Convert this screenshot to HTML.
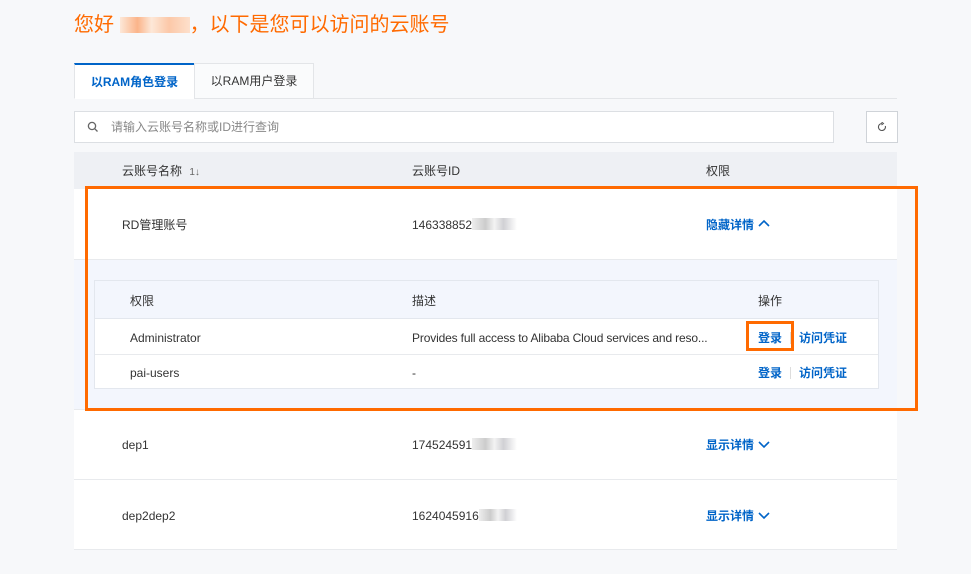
<!DOCTYPE html>
<html><head><meta charset="utf-8"><style>
*{box-sizing:border-box;margin:0;padding:0}
body{width:971px;height:574px;background:#f7f8fa;font-family:"Liberation Sans","Noto Sans CJK SC",sans-serif;font-size:12px;color:#333;position:relative;overflow:hidden}
.a{position:absolute;line-height:14px}
.title{left:74px;top:12px;font-size:20px;line-height:26px;color:#ff6a00}
.blur{display:inline-block;width:70px;height:16px;vertical-align:-2px;background:linear-gradient(90deg,#fde8d8,#fbb48a 25%,#fde8d8 45%,#fcc8a8 70%,#fde0cc)}
.tabline{left:74px;top:98px;width:823px;height:1px;background:#e3e5e8}
.tab{top:63px;height:36px;line-height:35px;text-align:center;font-size:12px;border:1px solid #e3e5e8;background:#fff}
.search{left:74px;top:111px;width:760px;height:32px;border:1px solid #dcdfe3;background:#fff;line-height:30px;padding-left:36px;color:#888}
.ref{left:866px;top:111px;width:32px;height:32px;border:1px solid #cfd3d8;background:#fff}
.th{left:74px;top:152px;width:823px;height:37px;background:#eef0f4}
.row{left:74px;width:823px;background:#fff;border-bottom:1px solid #e8eaed}
.link{color:#0064c8;font-weight:bold}
.bl{display:inline-block;height:12px;vertical-align:-1px;background:linear-gradient(90deg,#eee,#ccc 30%,#f3f3f3 50%,#d0d0d4 70%,#fff)}
.sep{position:absolute;width:1px;height:12px;background:#ddd}
</style></head><body>
<div class="a title">您好 <span class="blur"></span>，以下是您可以访问的云账号</div>
<div class="a tabline"></div>
<div class="a tab" style="left:74px;width:121px;border-top:2px solid #0064c8;border-bottom-color:#fff;color:#0064c8;font-weight:bold">以RAM角色登录</div>
<div class="a tab" style="left:194px;width:120px;background:#fafbfc">以RAM用户登录</div>
<div class="a search">请输入云账号名称或ID进行查询</div>
<svg class="a" style="left:87px;top:121px" width="12" height="12" viewBox="0 0 12 12"><circle cx="5" cy="5" r="3.6" fill="none" stroke="#666" stroke-width="1.3"/><path d="M7.6 7.6L10.5 10.5" stroke="#666" stroke-width="1.3"/></svg>
<div class="a ref"></div>
<svg class="a" style="left:877px;top:122px" width="10" height="10" viewBox="0 0 10 10"><path d="M5 1.5A3.5 3.5 0 1 0 8.3 4" fill="none" stroke="#555" stroke-width="1.1"/><path d="M4.5 0L6.5 1.5 4.5 3" fill="none" stroke="#555" stroke-width="1"/></svg>
<div class="a th"></div>
<div class="a" style="left:122px;top:164px">云账号名称 <span style="color:#666;font-size:10px;margin-left:4px">1↓</span></div>
<div class="a" style="left:412px;top:164px">云账号ID</div>
<div class="a" style="left:706px;top:164px">权限</div>
<div class="a row" style="top:189px;height:71px"></div>
<div class="a" style="left:122px;top:218px">RD管理账号</div>
<div class="a" style="left:412px;top:218px">146338852<span class="bl" style="width:45px"></span></div>
<div class="a link" style="left:706px;top:218px">隐藏详情</div>
<svg class="a" style="left:758px;top:219px" width="12" height="10" viewBox="0 0 12 10"><path d="M1 7L6 2 11 7" fill="none" stroke="#0064c8" stroke-width="1.6"/></svg>
<div class="a" style="left:74px;top:260px;width:823px;height:150px;background:#f3f6fd"></div>
<div class="a" style="left:94px;top:280px;width:785px;height:109px;background:#fff;border:1px solid #e3e7ee"></div>
<div class="a" style="left:95px;top:281px;width:783px;height:38px;background:#f3f6fd;border-bottom:1px solid #e3e7ee"></div>
<div class="a" style="left:95px;top:354px;width:783px;height:1px;background:#e8eaed"></div>
<div class="a" style="left:130px;top:294px">权限</div>
<div class="a" style="left:412px;top:294px">描述</div>
<div class="a" style="left:758px;top:294px">操作</div>
<div class="a" style="left:130px;top:331px">Administrator</div>
<div class="a" style="left:412px;top:331px;letter-spacing:-0.15px">Provides full access to Alibaba Cloud services and reso...</div>
<div class="a link" style="left:758px;top:331px">登录</div><div class="sep" style="left:790px;top:332px"></div><div class="a link" style="left:799px;top:331px">访问凭证</div>
<div class="a" style="left:130px;top:366px">pai-users</div>
<div class="a" style="left:412px;top:366px">-</div>
<div class="a link" style="left:758px;top:366px">登录</div><div class="sep" style="left:790px;top:367px"></div><div class="a link" style="left:799px;top:366px">访问凭证</div>
<div class="a row" style="top:409px;height:71px;border-top:1px solid #e8eaed"></div>
<div class="a" style="left:122px;top:438px">dep1</div>
<div class="a" style="left:412px;top:438px">174524591<span class="bl" style="width:45px"></span></div>
<div class="a link" style="left:706px;top:438px">显示详情</div>
<svg class="a" style="left:758px;top:439px" width="12" height="10" viewBox="0 0 12 10"><path d="M1 3L6 8 11 3" fill="none" stroke="#0064c8" stroke-width="1.6"/></svg>
<div class="a row" style="top:480px;height:70px"></div>
<div class="a" style="left:122px;top:509px">dep2dep2</div>
<div class="a" style="left:412px;top:509px">1624045916<span class="bl" style="width:38px"></span></div>
<div class="a link" style="left:706px;top:509px">显示详情</div>
<svg class="a" style="left:758px;top:510px" width="12" height="10" viewBox="0 0 12 10"><path d="M1 3L6 8 11 3" fill="none" stroke="#0064c8" stroke-width="1.6"/></svg>
<div class="a" style="left:85px;top:186px;width:833px;height:225px;border:3px solid #ff6a00"></div>
<div class="a" style="left:746px;top:321px;width:48px;height:30px;border:3px solid #ff6a00"></div>
</body></html>
